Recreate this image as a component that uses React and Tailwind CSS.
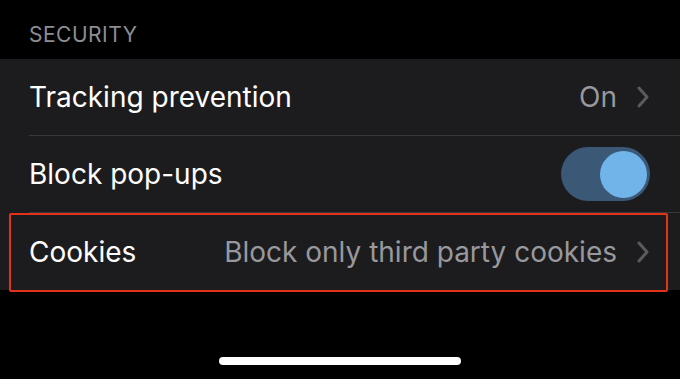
import React from "react";

const Chevron = () => (
  <svg width="14" height="24" viewBox="0 0 14 24" className="shrink-0">
    <path d="M3 3l8 9-8 9" fill="none" stroke="#5b5b5f" strokeWidth="3" strokeLinecap="round" strokeLinejoin="round" />
  </svg>
);

const Row = ({ label, value, children, divider }) => (
  <div className="pl-[29px]">
    <div className={"flex items-center h-[77px] pr-[30px] " + (divider ? "border-b border-[#38383a]" : "")}>
      <span className="text-white text-[28px] flex-1">{label}</span>
      {value && <span className="text-[#98989d] text-[28px] mr-[19px]">{value}</span>}
      {value && <Chevron />}
      {children}
    </div>
  </div>
);

export default function App() {
  return (
    <div className="w-[680px] h-[379px] bg-black flex flex-col" style={{ fontFamily: "Inter, 'Noto Sans', sans-serif" }}>
      <div className="h-[59px] flex items-end pb-[9px] pl-[29px]">
        <span className="text-[#8d8d92] text-[21px] tracking-[0.5px]">SECURITY</span>
      </div>
      <div className="bg-[#1c1c1e]">
        <Row label="Tracking prevention" value="On" divider />
        <Row label="Block pop-ups" divider>
          <div className="w-[89px] h-[54px] rounded-full bg-[#3b5876] flex items-center justify-end pr-[3px]">
            <div className="w-[47px] h-[47px] rounded-full bg-[#70b4ea]" />
          </div>
        </Row>
        <div className="relative">
          <Row label="Cookies" value="Block only third party cookies" />
          <div className="absolute left-[9px] right-[12px] top-0 bottom-[-2px] border-2 border-[#e3321c] rounded-[2px]" />
        </div>
      </div>
      <div className="flex-1 flex items-end justify-center pb-[14px]">
        <div className="w-[242px] h-[8px] rounded-full bg-white" />
      </div>
    </div>
  );
}
